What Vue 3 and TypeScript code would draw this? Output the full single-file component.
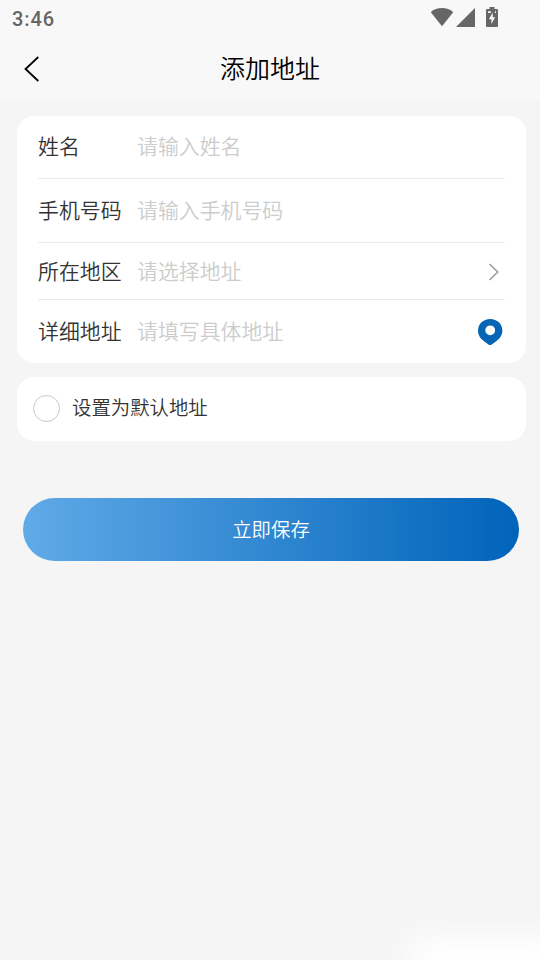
<template>
  <div class="page">
    <header class="header">
      <div class="status-bar">
        <span class="time">3:46</span>
        <div class="status-icons">
          <svg class="wifi" width="24" height="20" viewBox="0 0 24 20">
            <path d="M0.8 5.2C3.8 2.3 7.8 1 12 1s8.200 1.300 11.200 4.200L12 19.200z" fill="#666" />
          </svg>
          <svg class="signal" width="19" height="19" viewBox="0 0 19 19">
            <path d="M19 0v19H0z" fill="#666" />
          </svg>
          <svg class="battery" width="12" height="20" viewBox="0 0 12 20">
            <path d="M3.500 0h5v2H11a1 1 0 0 1 1 1v16a1 1 0 0 1-1 1H1a1 1 0 0 1-1-1V3a1 1 0 0 1 1-1h2.500z" fill="#666" />
            <path d="M2 4.200h2.800v1.800H2zM9 4.200h1v1.800H9z" fill="#f8f8f8" />
            <path d="M6.700 5.500v4.700h2.500L5.400 17v-4.800H2.900z" fill="#f8f8f8" />
          </svg>
        </div>
      </div>
      <div class="nav-bar">
        <button class="back" type="button" aria-label="返回">
          <svg width="16" height="26" viewBox="0 0 16 26" fill="none" stroke="#000" stroke-width="1.800">
            <path d="M14.300 1L1.500 13l12.800 12" />
          </svg>
        </button>
        <h1 class="title">添加地址</h1>
      </div>
    </header>

    <form class="content" @submit.prevent="handleSave">
      <section class="card form-card">
        <label v-for="field in fields" :key="field.key" class="row" :class="field.key">
          <span class="label">{{ field.label }}</span>
          <input
            v-model="form[field.key]"
            class="input"
            type="text"
            :placeholder="field.placeholder"
            :readonly="field.key === 'region'"
          />
          <svg v-if="field.key === 'region'" class="arrow" width="12" height="18" viewBox="0 0 12 18" fill="none" stroke="#999" stroke-width="1.500">
            <path d="M1.500 1l8.300 8-8.300 8" />
          </svg>
          <svg v-if="field.key === 'detail'" class="pin" width="26" height="28" viewBox="0 0 26 28">
            <path
              d="M13.200 1C6.200 1 1 6.100 1 12.600c0 4.700 2.400 8.200 6.300 10.900l4.100 2.900c1.100.8 2.300.8 3.400 0l4.100-2.900c3.900-2.700 6.500-6.200 6.500-10.900C25.400 6.100 20.200 1 13.200 1zm0 6.400a4.900 4.900 0 1 1 0 9.800 4.900 4.900 0 0 1 0-9.800z"
              fill="#0765b5"
              fill-rule="evenodd"
            />
          </svg>
        </label>
      </section>

      <label class="card default-card">
        <input v-model="isDefault" class="radio" type="checkbox" />
        <span class="default-text">设置为默认地址</span>
      </label>

      <button class="save" type="submit">立即保存</button>
    </form>
    <div class="corner-glow"></div>
  </div>
</template>

<script setup lang="ts">
import { reactive, ref } from 'vue'

type FieldKey = 'name' | 'phone' | 'region' | 'detail'

interface Field {
  key: FieldKey
  label: string
  placeholder: string
}

const fields: Field[] = [
  { key: 'name', label: '姓名', placeholder: '请输入姓名' },
  { key: 'phone', label: '手机号码', placeholder: '请输入手机号码' },
  { key: 'region', label: '所在地区', placeholder: '请选择地址' },
  { key: 'detail', label: '详细地址', placeholder: '请填写具体地址' }
]

const form = reactive<Record<FieldKey, string>>({
  name: '',
  phone: '',
  region: '',
  detail: ''
})
const isDefault = ref(false)

const emit = defineEmits<{
  save: [address: Record<FieldKey, string>, isDefault: boolean]
}>()

const handleSave = () => {
  emit('save', { ...form }, isDefault.value)
}
</script>

<style>
body {
  margin: 0;
  background: #f5f5f5;
}
</style>

<style scoped>
.page {
  position: relative;
  box-sizing: border-box;
  height: 960px;
  overflow: hidden;
  background: #f5f5f5;
  color: #333;
  font-family: 'Noto Sans CJK SC', sans-serif;
  font-weight: 350;
}

.header {
  height: 101px;
  background: #f8f8f8;
}

.status-bar {
  display: flex;
  justify-content: space-between;
  height: 36px;
  padding: 0 42px 0 12px;
}

.time {
  color: #666;
  font: 500 20px/38px Roboto, sans-serif;
  letter-spacing: 0.9px;
}

.status-icons {
  display: flex;
  align-items: flex-start;
  padding-top: 7px;
}

.signal {
  margin: 1px 11px 0 2px;
}

.nav-bar {
  display: grid;
  grid-template-columns: 64px 1fr 64px;
  align-items: center;
  height: 65px;
}

.back {
  display: flex;
  padding: 0 0 0 24px;
  border: 0;
  background: none;
}

.title {
  margin: 0;
  padding-bottom: 4px;
  color: #000;
  font-size: 25px;
  font-weight: 350;
  line-height: 36px;
  text-align: center;
}

.content {
  display: flex;
  flex-direction: column;
  padding: 15px 14px 0 17px;
}

.card {
  border-radius: 17px;
  background: #fff;
}

.form-card {
  padding: 0 21px;
}

.row {
  display: flex;
  align-items: center;
  box-sizing: border-box;
  height: 63px;
  border-bottom: 1px solid #ebebeb;
}

.row.phone {
  height: 64px;
}

.row.region {
  height: 57px;
}

.row.detail {
  border-bottom: 0;
}

.label {
  width: 99px;
  padding-bottom: 4px;
  font-size: 20.900px;
  line-height: 30px;
}

.input {
  flex: 1;
  min-width: 0;
  height: 30px;
  padding: 0 0 4px;
  border: 0;
  outline: none;
  background: none;
  color: #333;
  font-family: inherit;
  font-size: 20.900px;
  font-weight: inherit;
}

.region .label,
.region .input {
  padding-bottom: 2px;
}

.input::placeholder {
  color: #ccc;
}

.arrow {
  margin: 1px 5px 0 0;
}

.pin {
  margin-right: 2px;
}

.default-card {
  display: flex;
  align-items: center;
  gap: 12px;
  box-sizing: border-box;
  height: 64px;
  margin-top: 14px;
  padding: 0 0 2px 16px;
}

.radio {
  appearance: none;
  box-sizing: border-box;
  width: 27px;
  height: 27px;
  margin: 0;
  border: 1px solid #c8c8c8;
  border-radius: 50%;
}

.radio:checked {
  border: 8px solid #0765b5;
}

.default-text {
  padding-bottom: 3px;
  font-size: 19.400px;
  line-height: 28px;
}

.save {
  height: 63px;
  margin: 57px 7px 0 6px;
  padding: 0 0 3px;
  border: 0;
  border-radius: 32px;
  background: linear-gradient(90deg, #60aae7, #0063ba);
  color: #fff;
  font-family: inherit;
  font-size: 19.400px;
  font-weight: inherit;
}

/* soft light in the bottom corner */
.corner-glow {
  position: absolute;
  right: -30px;
  bottom: -35px;
  width: 160px;
  height: 58px;
  background: #fff;
  filter: blur(16px);
}
</style>
